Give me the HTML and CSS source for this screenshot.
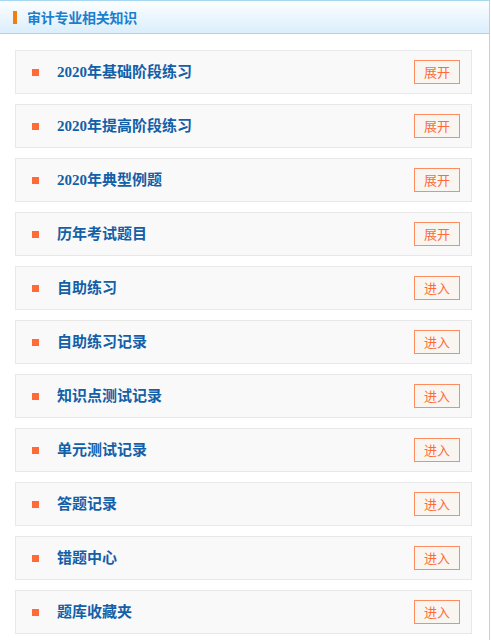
FILE: index.html
```html
<!DOCTYPE html>
<html lang="zh-CN">
<head>
<meta charset="utf-8">
<title>审计专业相关知识</title>
<link rel="stylesheet" href="styles.css">
</head>
<body>
<div class="panel">
  <div class="panel-head"><span class="mark"></span><span class="title">审计专业相关知识</span></div>
  <div class="list">
    <div class="row"><span class="dot"></span><span class="name">2020年基础阶段练习</span><span class="btn">展开</span></div>
    <div class="row"><span class="dot"></span><span class="name">2020年提高阶段练习</span><span class="btn">展开</span></div>
    <div class="row"><span class="dot"></span><span class="name">2020年典型例题</span><span class="btn">展开</span></div>
    <div class="row"><span class="dot"></span><span class="name">历年考试题目</span><span class="btn">展开</span></div>
    <div class="row"><span class="dot"></span><span class="name">自助练习</span><span class="btn">进入</span></div>
    <div class="row"><span class="dot"></span><span class="name">自助练习记录</span><span class="btn">进入</span></div>
    <div class="row"><span class="dot"></span><span class="name">知识点测试记录</span><span class="btn">进入</span></div>
    <div class="row"><span class="dot"></span><span class="name">单元测试记录</span><span class="btn">进入</span></div>
    <div class="row"><span class="dot"></span><span class="name">答题记录</span><span class="btn">进入</span></div>
    <div class="row"><span class="dot"></span><span class="name">错题中心</span><span class="btn">进入</span></div>
    <div class="row"><span class="dot"></span><span class="name">题库收藏夹</span><span class="btn">进入</span></div>
  </div>
</div>
</body>
</html>
```
FILE: styles.css
```css
html, body {
  margin: 0;
  padding: 0;
  background: #ffffff;
}
body {
  font-family: "Liberation Serif", "Noto Sans CJK SC", serif;
}
.panel {
  width: 490px;
  border-right: 1px solid #a8d8f0;
  min-height: 640px;
  box-sizing: border-box;
}
.panel-head {
  height: 32px;
  border-top: 1px solid #a8d8f0;
  border-bottom: 1px solid #a8d8f0;
  background: linear-gradient(to bottom, #fcfeff 0%, #dbeefc 100%);
  display: flex;
  align-items: center;
}
.mark {
  width: 4px;
  height: 13px;
  background: #f07f10;
  margin-left: 13px;
  margin-right: 10px;
}
.title {
  font-family: "Noto Sans CJK SC", sans-serif;
  font-size: 14px;
  font-weight: bold;
  color: #1b7fcf;
  letter-spacing: -0.25px;
}
.list {
  padding: 16px 17px 0 15px;
  display: flex;
  flex-direction: column;
  gap: 10px;
}
.row {
  height: 42px;
  border: 1px solid #e8e8e8;
  background: #f9f9f9;
  display: flex;
  align-items: center;
}
.dot {
  width: 7px;
  height: 7px;
  background: #ff6a37;
  margin-left: 16px;
  margin-right: 18px;
}
.name {
  flex: 1;
  font-size: 15px;
  font-weight: bold;
  color: #135fa8;
  line-height: 20px;
}
.btn {
  width: 44px;
  height: 22px;
  border: 1px solid #ff8c5f;
  background: #f9f6f2;
  color: #ff6a37;
  font-family: "Noto Sans CJK SC", sans-serif;
  font-size: 13px;
  line-height: 22px;
  text-align: center;
  margin-right: 11px;
}
```
